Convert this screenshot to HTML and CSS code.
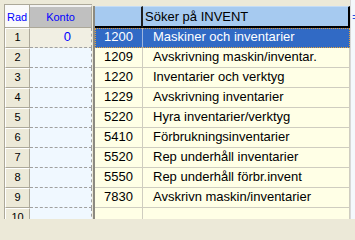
FILE: index.html
```html
<!DOCTYPE html>
<html>
<head>
<meta charset="utf-8">
<link rel="stylesheet" href="styles.css">
</head>
<body>
<div class="screen">
  <div class="left">
    <div class="lrow lhead">
      <div class="rad hrad">Rad</div>
      <div class="konto hkonto">Konto</div>
    </div>
    <div class="lrow"><div class="rad">1</div><div class="konto active">0</div></div>
    <div class="lrow"><div class="rad">2</div><div class="konto"></div></div>
    <div class="lrow"><div class="rad">3</div><div class="konto"></div></div>
    <div class="lrow"><div class="rad">4</div><div class="konto"></div></div>
    <div class="lrow"><div class="rad">5</div><div class="konto"></div></div>
    <div class="lrow"><div class="rad">6</div><div class="konto"></div></div>
    <div class="lrow"><div class="rad">7</div><div class="konto"></div></div>
    <div class="lrow"><div class="rad">8</div><div class="konto"></div></div>
    <div class="lrow"><div class="rad">9</div><div class="konto"></div></div>
    <div class="lrow"><div class="rad">10</div><div class="konto"></div></div>
  </div>
  <div class="sep"></div>
  <div class="right">
    <div class="rrow rhead">
      <div class="code hcode"></div>
      <div class="desc hdesc">Söker på INVENT</div>
    </div>
    <div class="rrow selected"><div class="code">1200</div><div class="desc">Maskiner och inventarier</div></div>
    <div class="rrow"><div class="code">1209</div><div class="desc">Avskrivning maskin/inventar.</div></div>
    <div class="rrow"><div class="code">1220</div><div class="desc">Inventarier och verktyg</div></div>
    <div class="rrow"><div class="code">1229</div><div class="desc">Avskrivning inventarier</div></div>
    <div class="rrow"><div class="code">5220</div><div class="desc">Hyra inventarier/verktyg</div></div>
    <div class="rrow"><div class="code">5410</div><div class="desc">Förbrukningsinventarier</div></div>
    <div class="rrow"><div class="code">5520</div><div class="desc">Rep underhåll inventarier</div></div>
    <div class="rrow"><div class="code">5550</div><div class="desc">Rep underhåll förbr.invent</div></div>
    <div class="rrow"><div class="code">7830</div><div class="desc">Avskrivn maskin/inventarier</div></div>
    <div class="rrow"><div class="code"></div><div class="desc"></div></div>
  </div>
  <div class="edge"><span class="edge-mark">=</span></div>
</div>
</body>
</html>
```
FILE: styles.css
```css
html, body {
  margin: 0;
  padding: 0;
  height: 219px;
  background: #ece9d8;
  overflow: hidden;
}
.screen {
  display: flex;
  align-items: flex-start;
  width: 355px;
  height: 219px;
  overflow: hidden;
  font-family: "Liberation Sans", Arial, sans-serif;
  font-size: 13px;
  color: #000;
}
.left {
  flex: none;
  margin-top: 4px;
  margin-left: 4px;
  border-top: 1px solid #aca899;
  border-left: 1px solid #aca899;
  display: flex;
  flex-direction: column;
}
.lrow {
  display: flex;
  height: 20px;
  flex: none;
}
.lhead {
  height: 23px;
}
.rad {
  box-sizing: border-box;
  width: 25px;
  height: 100%;
  background: #ece9d8;
  border-top: 1px solid #ffffff;
  border-left: 1px solid #ffffff;
  border-right: 1px solid #aca899;
  border-bottom: 1px solid #aca899;
  text-align: center;
  font-size: 11px;
  line-height: 16px;
}
.hrad {
  background: #fafafa;
  border-top: 0;
  border-left: 0;
  color: #0000ff;
  text-align: left;
  padding-left: 2px;
  line-height: 24px;
}
.konto {
  box-sizing: border-box;
  width: 62px;
  height: 100%;
  background: #f0f8ff;
  border-bottom: 1px dashed #a0a0a0;
  border-right: 1px dashed #a0a0a0;
  color: #0000ff;
  text-align: right;
  padding-right: 20px;
  line-height: 18px;
}
.konto.active {
  background: #f1efe3;
}
.hkonto {
  background: #c0c0c0;
  border-top: 2px solid #f2f2f2;
  border-bottom: 1px solid #aca899;
  border-right: 1px solid #aca899;
  text-align: center;
  padding-right: 0;
  font-size: 11px;
  line-height: 20px;
}
.sep {
  flex: none;
  width: 2px;
  height: 213px;
  margin-top: 6px;
  margin-left: 1px;
  background: #8c8a80;
}
.right {
  flex: none;
  margin-top: 6px;
  display: flex;
  flex-direction: column;
}
.rrow {
  display: flex;
  flex: none;
  height: 20px;
  background: #ffffe6;
}
.rhead {
  height: 22px;
  background: #a6caf0;
}
.code {
  box-sizing: border-box;
  width: 48px;
  height: 100%;
  border-right: 1px solid #cfcdc0;
  border-bottom: 1px solid #cfcdc0;
  padding-left: 9px;
  line-height: 17px;
  white-space: nowrap;
}
.desc {
  box-sizing: border-box;
  width: 207px;
  height: 100%;
  border-right: 1px solid #cfcdc0;
  border-bottom: 1px solid #cfcdc0;
  padding-left: 10px;
  line-height: 17px;
  white-space: nowrap;
  overflow: hidden;
}
.hcode {
  border-top: 1px solid #c4dcf6;
  border-right: 2px solid #202020;
  border-bottom: 2px solid #000;
}
.hdesc {
  border-top: 1px solid #c4dcf6;
  border-right: 2px solid #000;
  border-bottom: 2px solid #000;
  padding-left: 2px;
  line-height: 19px;
}
.selected {
  background: #316ac5;
  color: #ffffff;
  outline: 1px dotted #e6a23c;
  outline-offset: -1px;
}
.selected .code {
  border-right-color: #9fb6de;
  border-bottom-color: #316ac5;
}
.selected .desc {
  border-right-color: #316ac5;
  border-bottom-color: #316ac5;
}
.edge {
  flex: none;
  width: 6px;
  height: 219px;
  background: #f4f8fc;
  border-left: 1px solid #d8d8d8;
  overflow: hidden;
}
.edge-mark {
  display: block;
  margin-top: 10px;
  margin-left: 1px;
  color: #2050e0;
  font-size: 13px;
  line-height: 14px;
}
```
